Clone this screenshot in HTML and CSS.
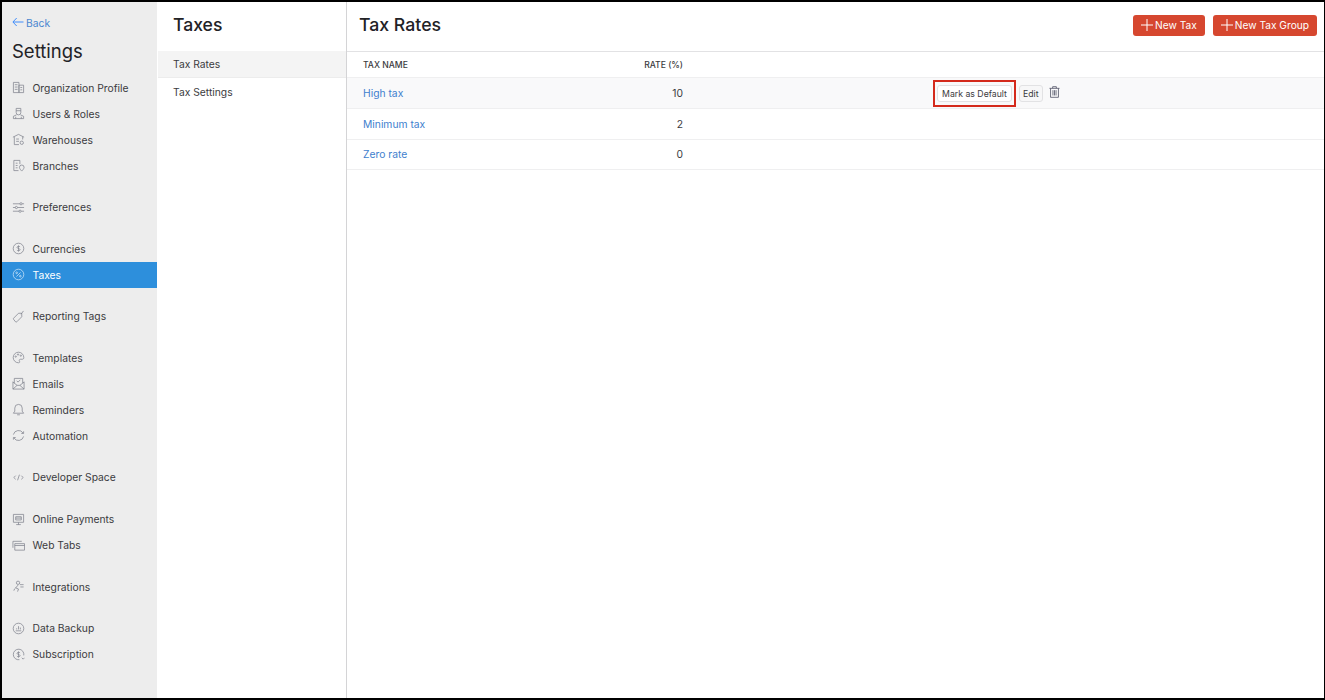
FILE: index.html
```html
<!DOCTYPE html>
<html lang="en">
<head>
<meta charset="utf-8">
<title>Taxes</title>
<link rel="stylesheet" href="styles.css">
</head>
<body>
<svg class="defs" width="0" height="0" aria-hidden="true">
  <defs>
    <symbol id="i-org" viewBox="0 0 14 14"><path d="M1.500 1.500h6v11h-6zM7.500 4.500h5v8h-5zM3 4h3M3 6.500h3M3 9h3M9 7h2M9 9.500h2"/></symbol>
    <symbol id="i-users" viewBox="0 0 14 14"><path d="M4.500 1.500h5v4.500a2.500 2.500 0 0 1-5 0zM4.800 8.500 1.500 10v2.500h11V10L9.200 8.500M4 12.500v-2M10 12.500v-2M4.500 4h5"/></symbol>
    <symbol id="i-ware" viewBox="0 0 14 14"><path d="M1 4.500 7 1.500l6 3M2.500 4v8.500h5M11.500 4v3M4.500 6.500h3M4.500 9h3"/><circle cx="10.500" cy="10.500" r="1.800"/></symbol>
    <symbol id="i-branch" viewBox="0 0 14 14"><path d="M2 1.500h6.500v4M2 1.500v11h5M4 4.500h2M4 7h2M4 9.500h2"/><path d="M10.500 6.500a2.500 2.500 0 0 1 2.500 2.500c0 1.600-2.500 4-2.500 4S8 10.600 8 9a2.500 2.500 0 0 1 2.500-2.500z"/></symbol>
    <symbol id="i-prefs" viewBox="0 0 14 14"><path d="M1 3h7.500M11 3h2M1 7h2.500M6 7h7M1 11h6.500M10 11h3"/><circle cx="9.700" cy="3" r="1.200"/><circle cx="4.700" cy="7" r="1.200"/><circle cx="8.700" cy="11" r="1.200"/></symbol>
    <symbol id="i-cur" viewBox="0 0 14 14"><circle cx="7" cy="7" r="5.700"/><path d="M8.700 5.300C8.300 4.500 5.400 4.300 5.400 5.800c0 1.500 3.300.9 3.300 2.500 0 1.500-3 1.300-3.400.4M7 3.700v6.600"/></symbol>
    <symbol id="i-tax" viewBox="0 0 14 14"><circle cx="7" cy="7" r="5.700"/><path d="M4.800 9.200l4.400-4.400"/><circle cx="5" cy="5.200" r=".9"/><circle cx="9" cy="8.800" r=".9"/></symbol>
    <symbol id="i-tag" viewBox="0 0 14 14"><path d="M7 3.500h3.500v3.800l-5.300 5.400a1 1 0 0 1-1.400 0L1.800 10.200a1 1 0 0 1 0-1.400zM9.500 4.500c1-1 2.300-2.200 2.800-3.500"/></symbol>
    <symbol id="i-tpl" viewBox="0 0 14 14"><path d="M7 1.300a5.700 5.700 0 1 0 0 11.400c1.500 0 1.500-1 1-1.800-.6-1 0-2 1-2h2.200c1 0 1.500-.7 1.500-1.900A5.700 5.700 0 0 0 7 1.300z"/><circle cx="4" cy="6" r=".7"/><circle cx="6.500" cy="3.800" r=".7"/><circle cx="9.500" cy="5" r=".7"/></symbol>
    <symbol id="i-mail" viewBox="0 0 14 14"><path d="M1 5v8h12V5M1 13l4.500-4h3l4.500 4M1 5.500l4.500 3.500M13 5.500 8.500 9M2.500 6.500V1.500h9v5M5 4l1.500 1.500L9 3"/></symbol>
    <symbol id="i-bell" viewBox="0 0 14 14"><path d="M7 1.500a4 4 0 0 0-4 4v3.300L1.500 11h11L11 8.800V5.500a4 4 0 0 0-4-4zM5.500 12.700h3"/></symbol>
    <symbol id="i-auto" viewBox="0 0 14 14"><path d="M1.500 6A5.700 5.700 0 0 1 12 4.500M12.500 8A5.700 5.700 0 0 1 2 9.500"/><path d="M12.500 2.500v2.300H10M1.500 11.500V9.200H4"/></symbol>
    <symbol id="i-dev" viewBox="0 0 14 14"><path d="M4 5 2 7l2 2M10 5l2 2-2 2M8 4 6 10"/></symbol>
    <symbol id="i-pay" viewBox="0 0 14 14"><path d="M1.500 1.500h11v8.500h-11zM4 4h6v3.500H4zM4 5.500h6M7 10v2.500M4.500 12.500h5"/></symbol>
    <symbol id="i-web" viewBox="0 0 14 14"><path d="M1 2.500h9.500M1 2.500v7M3 5h10.500v7H3zM3 7h10.500"/></symbol>
    <symbol id="i-int" viewBox="0 0 14 14"><circle cx="6.500" cy="3" r="1.800"/><path d="M6.500 5.500 4 8.500l3 1.200-1 2.800M4 8.500c-1 .5-1.800 1.500-2 3M8.500 5h4M9 7.500h3.500"/></symbol>
    <symbol id="i-data" viewBox="0 0 14 14"><circle cx="7" cy="7" r="5.700"/><path d="M4 9.500h6M5 8V6.800M7 8V4.500M9 8V6"/></symbol>
    <symbol id="i-sub" viewBox="0 0 14 14"><path d="M12.700 8A5.700 5.700 0 1 0 8 12.600"/><path d="M8.700 5.300C8.300 4.500 5.400 4.300 5.400 5.800c0 1.500 3.300.9 3.300 2.500 0 1.500-3 1.300-3.400.4M7 3.700v6.600M10.500 10.500l1.500 1.500 1.500-1.500"/></symbol>
  </defs>
</svg>
<div class="frame">
  <aside class="sidebar">
    <a class="back" href="#">
      <svg class="back-icon" viewBox="0 0 12 10" aria-hidden="true"><path d="M11.500 5H1M4.700 1 .9 5l3.800 4"/></svg>
      <span>Back</span>
    </a>
    <h1 class="settings-title">Settings</h1>
    <nav class="nav">
      <ul class="nav-group">
        <li class="nav-item"><svg class="nav-icon"><use href="#i-org"/></svg>Organization Profile</li>
        <li class="nav-item"><svg class="nav-icon"><use href="#i-users"/></svg>Users &amp; Roles</li>
        <li class="nav-item"><svg class="nav-icon"><use href="#i-ware"/></svg>Warehouses</li>
        <li class="nav-item"><svg class="nav-icon"><use href="#i-branch"/></svg>Branches</li>
      </ul>
      <ul class="nav-group">
        <li class="nav-item"><svg class="nav-icon"><use href="#i-prefs"/></svg>Preferences</li>
      </ul>
      <ul class="nav-group">
        <li class="nav-item"><svg class="nav-icon"><use href="#i-cur"/></svg>Currencies</li>
        <li class="nav-item is-active"><svg class="nav-icon"><use href="#i-tax"/></svg>Taxes</li>
      </ul>
      <ul class="nav-group">
        <li class="nav-item"><svg class="nav-icon"><use href="#i-tag"/></svg>Reporting Tags</li>
      </ul>
      <ul class="nav-group">
        <li class="nav-item"><svg class="nav-icon"><use href="#i-tpl"/></svg>Templates</li>
        <li class="nav-item"><svg class="nav-icon"><use href="#i-mail"/></svg>Emails</li>
        <li class="nav-item"><svg class="nav-icon"><use href="#i-bell"/></svg>Reminders</li>
        <li class="nav-item"><svg class="nav-icon"><use href="#i-auto"/></svg>Automation</li>
      </ul>
      <ul class="nav-group">
        <li class="nav-item"><svg class="nav-icon"><use href="#i-dev"/></svg>Developer Space</li>
      </ul>
      <ul class="nav-group">
        <li class="nav-item"><svg class="nav-icon"><use href="#i-pay"/></svg>Online Payments</li>
        <li class="nav-item"><svg class="nav-icon"><use href="#i-web"/></svg>Web Tabs</li>
      </ul>
      <ul class="nav-group">
        <li class="nav-item"><svg class="nav-icon"><use href="#i-int"/></svg>Integrations</li>
      </ul>
      <ul class="nav-group">
        <li class="nav-item"><svg class="nav-icon"><use href="#i-data"/></svg>Data Backup</li>
        <li class="nav-item"><svg class="nav-icon"><use href="#i-sub"/></svg>Subscription</li>
      </ul>
    </nav>
  </aside>
  <section class="subnav">
    <h2 class="subnav-title">Taxes</h2>
    <ul class="subnav-list">
      <li class="subnav-item is-current">Tax Rates</li>
      <li class="subnav-item">Tax Settings</li>
    </ul>
  </section>
  <main class="content">
    <header class="content-head">
      <h2 class="content-title">Tax Rates</h2>
      <div class="head-actions">
        <button class="btn-primary"><svg class="plus" viewBox="0 0 12 12" aria-hidden="true"><path d="M6 0v12M0 6h12"/></svg>New Tax</button>
        <button class="btn-primary"><svg class="plus" viewBox="0 0 12 12" aria-hidden="true"><path d="M6 0v12M0 6h12"/></svg>New Tax Group</button>
      </div>
    </header>
    <div class="table">
      <div class="row row-head">
        <div class="cell-name">TAX NAME</div>
        <div class="cell-rate">RATE (%)</div>
      </div>
      <div class="row row-body is-hover">
        <a class="cell-name link" href="#">High tax</a>
        <div class="cell-rate">10</div>
        <div class="cell-actions">
          <span class="highlight"><button class="btn-small btn-mark">Mark as Default</button></span>
          <button class="btn-small">Edit</button>
          <svg class="trash" viewBox="0 0 12 13" aria-hidden="true"><path d="M.5 2.500h11M4 2.500V.7h4v1.800M1.700 2.500v9.800h8.600V2.500M4.300 4.500v5.800M6 4.500v5.800M7.700 4.500v5.800"/></svg>
        </div>
      </div>
      <div class="row row-body">
        <a class="cell-name link" href="#">Minimum tax</a>
        <div class="cell-rate">2</div>
      </div>
      <div class="row row-body">
        <a class="cell-name link" href="#">Zero rate</a>
        <div class="cell-rate">0</div>
      </div>
    </div>
  </main>
</div>
</body>
</html>
```

FILE: styles.css
```css
* { box-sizing: border-box; }
html, body { margin: 0; height: 100%; }
body {
  font-family: Inter, "Liberation Sans", sans-serif;
  color: #21263c;
  background: #000;
  overflow: hidden;
}
.defs { position: absolute; }
ul { list-style: none; margin: 0; padding: 0; }
h1, h2 { margin: 0; font-weight: 400; }
a { text-decoration: none; }

.frame {
  display: grid;
  grid-template-columns: 155px 190px 1fr;
  height: 696px;
  margin: 2px 1px 2px 2px;
  background: #fff;
}

.sidebar {
  background: #ededed;
  display: flex;
  flex-direction: column;
  padding-top: 14px;
}
.back {
  display: flex;
  align-items: center;
  gap: 2px;
  height: 14px;
  padding-left: 10px;
  color: #4a86d0;
  font-size: 10.300px;
}
.back-icon {
  width: 12px;
  height: 10px;
  margin-top: -3px;
  fill: none;
  stroke: #408dfb;
  stroke-width: 1;
}
.settings-title {
  font-size: 18.500px;
  line-height: 24px;
  margin: 9px 0 11.500px 10px;
  color: #222226;
}
.nav-group { margin-bottom: 15.600px; }
.nav-item {
  display: flex;
  align-items: center;
  height: 26px;
  padding-left: 10px;
  font-size: 10.300px;
  color: #3b3b40;
}
.nav-icon {
  width: 13px;
  height: 13px;
  margin-right: 7.500px;
  fill: none;
  stroke: #80838e;
  stroke-width: .8;
  flex: none;
}
.nav-item.is-active { background: #2d8fdc; color: #fff; }
.is-active .nav-icon { stroke: #cfe6f8; }

.subnav {
  border-right: 1px solid #d4d4d6;
  display: flex;
  flex-direction: column;
}
.subnav-title {
  height: 49px;
  padding: 12px 0 0 16px;
  font-size: 17.600px;
  line-height: 22px;
  font-weight: 500;
  color: #222226;
}
.subnav-item {
  height: 27px;
  padding-left: 16px;
  display: flex;
  align-items: center;
  font-size: 10.300px;
  color: #3b3b40;
}
.subnav-item.is-current { margin-left: 1px; padding-left: 15px; background: #f4f4f4; border-bottom: 1px solid #ececec; }

.content { display: flex; flex-direction: column; min-width: 0; }
.content-head {
  height: 50px;
  border-bottom: 1px solid #e2e2e4;
  display: flex;
  align-items: flex-start;
  justify-content: space-between;
  padding: 12px 7px 0 12px;
}
.content-title { font-size: 17.700px; line-height: 22px; font-weight: 500; color: #222226; }
.head-actions { display: flex; gap: 8px; margin-top: 1px; }
.btn-primary {
  height: 21px;
  padding: 0 8px 1px;
  display: flex;
  align-items: center;
  gap: 2px;
  border: 0;
  border-radius: 3px;
  background: #d6472f;
  color: #fff;
  font: 400 10.200px Inter, "Liberation Sans", sans-serif;
}
.plus { width: 12px; height: 12px; fill: none; stroke: #fff; stroke-width: 1; }

.row {
  display: flex;
  align-items: center;
  border-bottom: 1px solid #efeff0;
  padding-left: 16px;
  font-size: 10.300px;
}
.row-head { height: 26px; font-size: 8.600px; font-weight: 500; color: #3b3b40; }
.row-body { height: 30.800px; color: #3b3b40; }
.row-body.is-hover { background: #f9f9fa; }
.cell-name { width: 260px; flex: none; }
.cell-rate { width: 60px; flex: none; text-align: right; }
.link { color: #3f7fce; }
.cell-actions {
  display: flex;
  align-items: center;
  gap: 5px;
  margin: 2px 0 0 250px;
}
.highlight {
  display: flex;
  align-items: center;
  justify-content: center;
  width: 83px;
  height: 27px;
  border: 2px solid #d42a1c;
  margin-right: -2px;
}
.btn-small {
  height: 17px;
  padding: 0 3px;
  border: 1px solid #e2e2e4;
  border-radius: 3px;
  background: #f7f7f8;
  color: #3b3b40;
  font: 400 8.700px Inter, "Liberation Sans", sans-serif;
  white-space: nowrap;
}
.btn-mark { padding: 0 4.500px; background: #fff; }
.trash {
  width: 11px;
  height: 12px;
  margin: -3px 0 0 1px;
  fill: none;
  stroke: #55586a;
  stroke-width: .9;
}
```
